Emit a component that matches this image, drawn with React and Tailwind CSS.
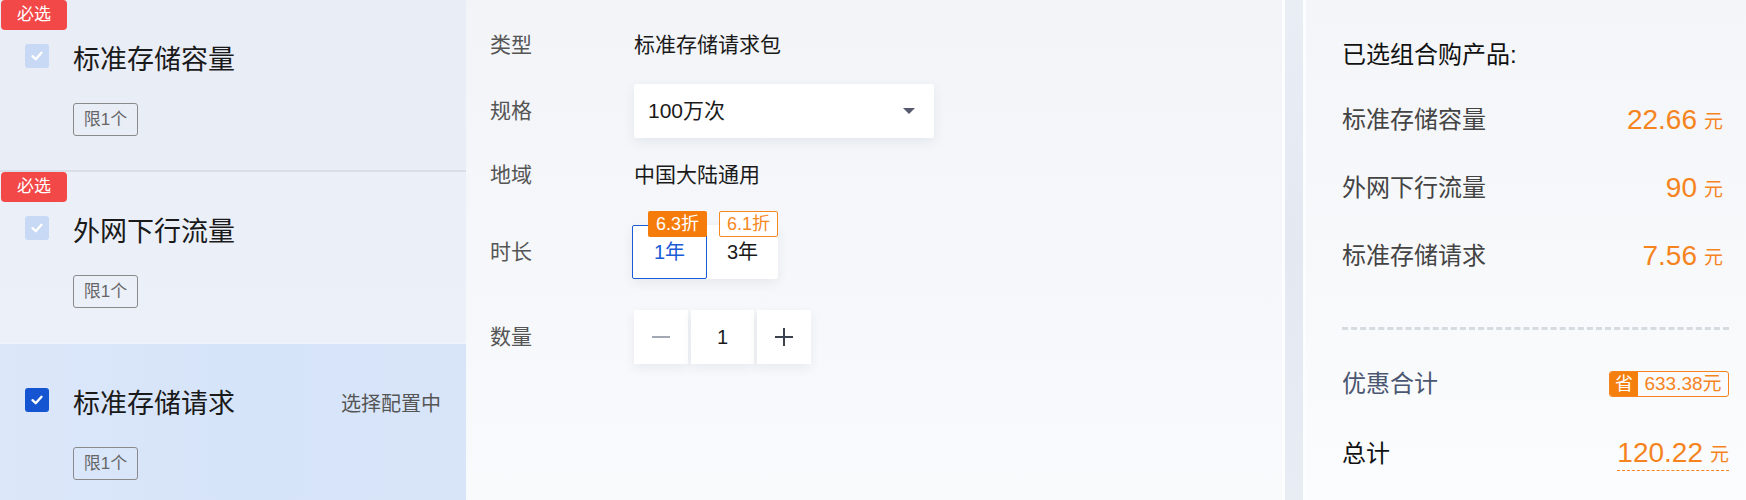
import React from "react";

const FONT = "font-['Liberation_Sans','Noto_Sans_CJK_SC',sans-serif]";

function Check({ active }) {
  return (
    <div
      className={
        "w-[24px] h-[24px] rounded-[3px] flex items-center justify-center shrink-0 " +
        (active ? "bg-[#1655d2]" : "bg-[#c7d9f4]")
      }
    >
      <svg width="14" height="14" viewBox="0 0 14 14">
        <path d="M2.5 7.2 L5.7 10.2 L11.5 3.8" fill="none" stroke="#ffffff" strokeWidth="2.4" strokeLinecap="round" strokeLinejoin="round" />
      </svg>
    </div>
  );
}

function LeftRow({ title, badge, active, extra, className }) {
  return (
    <div className={"relative pl-[25px] pt-[44px] " + className}>
      {badge && (
        <div className="absolute top-0 left-[1px] w-[66px] h-[30px] rounded-[4px] bg-[#f24848] text-white text-[17px] leading-[30px] text-center">
          必选
        </div>
      )}
      <div className="flex items-start">
        <Check active={active} />
        <div className="ml-[24px] flex-1 flex items-center h-[32px]">
          <span className="text-[27px] leading-[32px] text-[#1a1a1a]">{title}</span>
          {extra && (
            <span className="ml-auto mr-[25px] text-[20px] leading-[32px] text-[#555]">{extra}</span>
          )}
        </div>
      </div>
      <div className="ml-[48px] mt-[27px] w-[65px] h-[33px] border border-[#8a8a8a] rounded-[3px] flex items-center justify-center text-[17px] text-[#666]">
        限1个
      </div>
    </div>
  );
}

function Label({ children }) {
  return <div className="w-[144px] text-[21px] text-[#555] leading-[30px]">{children}</div>;
}

function PriceRow({ name, price, mt }) {
  return (
    <div className={"h-[48px] flex items-center pr-[6px] " + mt}>
      <span className="text-[24px] text-[#444] leading-[32px]">{name}</span>
      <span className="ml-auto text-[28px] text-[#f5841f] leading-[32px]">{price}</span>
      <span className="ml-[7px] text-[19px] text-[#f5841f] leading-[32px] mt-[4px]">元</span>
    </div>
  );
}

export default function App() {
  return (
    <div className={"flex w-[1746px] h-[500px] overflow-hidden " + FONT}>
      {/* Left panel */}
      <div className="w-[466px] shrink-0 flex flex-col bg-[#e9eef6]">
        <LeftRow title="标准存储容量" badge className="h-[170px] bg-[#e8edf6]" />
        <div className="h-[2px] bg-[#d9dee7]" />
        <LeftRow title="外网下行流量" badge className="h-[170px] bg-gradient-to-b from-[#eaeff8] to-[#ecf0f8]" />
        <div className="h-[2px] bg-[#f0f3f9]" />
        <LeftRow
          title="标准存储请求"
          active
          extra="选择配置中"
          className="flex-1 bg-gradient-to-r from-[#dce7f9] via-[#d6e4f9] to-[#d8e5f9]"
        />
      </div>

      {/* Middle panel */}
      <div className="w-[816px] shrink-0 bg-gradient-to-b from-[#f2f4f8] to-[#f9fafc] pl-[24px] pt-[18px]">
        <div className="h-[54px] flex items-center">
          <Label>类型</Label>
          <span className="text-[21px] text-[#1a1a1a]">标准存储请求包</span>
        </div>
        <div className="h-[54px] mt-[12px] flex items-center">
          <Label>规格</Label>
          <div className="w-[300px] h-[54px] bg-white rounded-[3px] shadow-[0_4px_12px_rgba(40,60,100,0.08)] flex items-center pl-[14px] pr-[19px]">
            <span className="text-[21px] text-[#1a1a1a]">100万次</span>
            <svg className="ml-auto" width="12" height="6" viewBox="0 0 12 6">
              <path d="M0 0 L12 0 L6 6 Z" fill="#555a6e" />
            </svg>
          </div>
        </div>
        <div className="h-[54px] mt-[10px] flex items-center">
          <Label>地域</Label>
          <span className="text-[21px] text-[#1a1a1a]">中国大陆通用</span>
        </div>
        <div className="h-[54px] mt-[23px] flex items-center">
          <Label>时长</Label>
          <div className="flex -ml-[2px] shadow-[0_4px_12px_rgba(40,60,100,0.08)] rounded-[3px]">
            <div className="relative w-[75px] h-[54px] border border-[#1a5bd6] rounded-[2px] bg-white flex items-center justify-center text-[20px] text-[#1a5bd6]">
              1年
              <div className="absolute -top-[15px] -right-[1px] w-[59px] h-[26px] bg-[#f57c0a] rounded-[2px] text-white text-[18px] leading-[26px] text-center">
                6.3折
              </div>
            </div>
            <div className="relative w-[71px] h-[54px] bg-white rounded-r-[3px] flex items-center justify-center text-[20px] text-[#1a1a1a]">
              3年
              <div className="absolute -top-[14px] right-0 w-[59px] h-[26px] border border-[#f5891f] bg-white rounded-[2px] text-[#f5891f] text-[18px] leading-[24px] text-center">
                6.1折
              </div>
            </div>
          </div>
        </div>
        <div className="h-[54px] mt-[31px] flex items-center">
          <Label>数量</Label>
          <div className="flex gap-[3px]">
            <div className="w-[54px] h-[54px] bg-white shadow-[0_4px_10px_rgba(40,60,100,0.07)] flex items-center justify-center">
              <svg width="20" height="20" viewBox="0 0 20 20">
                <path d="M1 10 H19" stroke="#a2a8b4" strokeWidth="2" />
              </svg>
            </div>
            <div className="w-[63px] h-[54px] bg-white shadow-[0_4px_10px_rgba(40,60,100,0.07)] flex items-center justify-center text-[20px] text-[#1a1a1a]">
              1
            </div>
            <div className="w-[54px] h-[54px] bg-white shadow-[0_4px_10px_rgba(40,60,100,0.07)] flex items-center justify-center">
              <svg width="20" height="20" viewBox="0 0 20 20">
                <path d="M1 10 H19 M10 1 V19" stroke="#3c4150" strokeWidth="2" />
              </svg>
            </div>
          </div>
        </div>
      </div>

      {/* Separator strip */}
      <div className="w-[3px] shrink-0 bg-[#fcfdfe]" />
      <div className="w-[18px] shrink-0 bg-gradient-to-b from-[#e9edf4] via-[#e4e8f1] to-[#e8ecf3]" />
      <div className="w-[3px] shrink-0 bg-[#fcfdfe]" />

      {/* Right panel */}
      <div className="flex-1 bg-gradient-to-b from-[#f3f5f8] to-[#fbfcfd] pl-[36px] pr-[17px] pt-[35px]">
        <div className="h-[40px] flex items-center text-[24px] text-[#111] leading-[32px]">已选组合购产品:</div>
        <PriceRow name="标准存储容量" price="22.66" mt="mt-[21px]" />
        <PriceRow name="外网下行流量" price="90" mt="mt-[20px]" />
        <PriceRow name="标准存储请求" price="7.56" mt="mt-[20px]" />
        <div className="mt-[47px] border-t-[3px] border-dashed border-[#d6dae1]" />
        <div className="h-[48px] mt-[30px] flex items-center">
          <span className="text-[24px] text-[#4b5670] leading-[32px]">优惠合计</span>
          <div className="ml-auto h-[26px] w-[120px] border border-[#f5841f] rounded-[3px] flex overflow-hidden">
            <div className="w-[28px] h-full bg-[#f57f0c] text-white text-[18px] leading-[24px] text-center">省</div>
            <div className="flex-1 text-[#f5841f] text-[19px] leading-[24px] text-center">633.38元</div>
          </div>
        </div>
        <div className="h-[48px] mt-[22px] flex items-center">
          <span className="text-[24px] text-[#111] leading-[32px]">总计</span>
          <div className="ml-auto flex items-end border-b border-dashed border-[#f5841f] pb-[1px]">
            <span className="text-[28px] text-[#f5841f] leading-[32px]">120.22</span>
            <span className="ml-[7px] text-[19px] text-[#f5841f] leading-[28px]">元</span>
          </div>
        </div>
      </div>
    </div>
  );
}
